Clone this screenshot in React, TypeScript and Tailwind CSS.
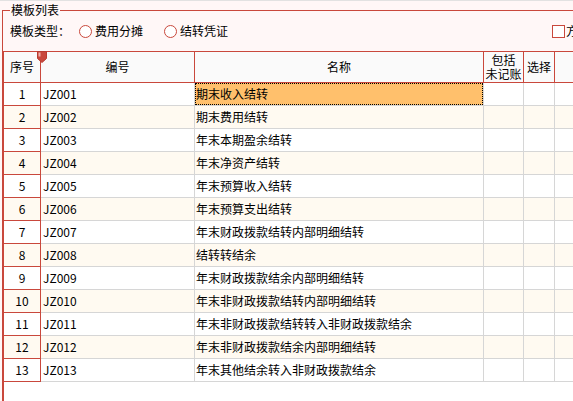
import React from "react";

const rows: [string, string][] = [
  ["JZ001", "期末收入结转"],
  ["JZ002", "期末费用结转"],
  ["JZ003", "年末本期盈余结转"],
  ["JZ004", "年末净资产结转"],
  ["JZ005", "年末预算收入结转"],
  ["JZ006", "年末预算支出结转"],
  ["JZ007", "年末财政拨款结转内部明细结转"],
  ["JZ008", "结转转结余"],
  ["JZ009", "年末财政拨款结余内部明细结转"],
  ["JZ010", "年末非财政拨款结转内部明细结转"],
  ["JZ011", "年末非财政拨款结转转入非财政拨款结余"],
  ["JZ012", "年末非财政拨款结余内部明细结转"],
  ["JZ013", "年末其他结余转入非财政拨款结余"],
];

function Radio({ label }: { label: string }) {
  return (
    <div className="flex items-center shrink-0">
      <span className="w-[13px] h-[13px] rounded-full border border-[#c9483c] bg-white shrink-0" />
      <span className="ml-[3px] leading-[14px]">{label}</span>
    </div>
  );
}

export default function App() {
  return (
    <div
      className="w-[573px] h-[401px] overflow-hidden bg-[#fff7f7] border-t border-[#e2e2e2] text-[12px] text-black"
      style={{ fontFamily: '"Noto Sans CJK SC", "Liberation Sans", sans-serif' }}
    >
      <div className="relative mt-[9px] ml-[2px] h-[400px] border-t border-l border-[#c9483c]">
        <span className="absolute left-[7px] top-[-8px] px-[1px] leading-[14px] bg-[#fff7f7]">
          模板列表
        </span>
        <div className="flex items-center h-[40px] pl-[7px] whitespace-nowrap">
          <span className="w-[60px] shrink-0 leading-[14px]">模板类型：</span>
          <div className="ml-[9px] flex items-center shrink-0">
            <Radio label="费用分摊" />
            <div className="ml-[21px]">
              <Radio label="结转凭证" />
            </div>
          </div>
          <div className="ml-[324px] flex items-center shrink-0">
            <span className="w-[13px] h-[13px] border border-[#c9483c] bg-white shrink-0" />
            <span className="ml-[1px] leading-[14px]">方案</span>
          </div>
        </div>
        <div className="relative h-[360px] bg-white border-t border-l border-[#c9483c]">
          <div className="flex h-[31px] bg-[#fafafa] border-b border-[#c9483c] whitespace-nowrap">
            <div className="w-[37px] shrink-0 border-r border-[#c9483c] flex items-center justify-center">序号</div>
            <div className="w-[154px] shrink-0 border-r border-[#c9483c] flex items-center justify-center">编号</div>
            <div className="w-[289px] shrink-0 border-r border-[#c9483c] flex items-center justify-center">名称</div>
            <div className="w-[40px] shrink-0 border-r border-[#c9483c] flex flex-col items-center justify-center leading-[14px]">
              <span>包括</span>
              <span>未记账</span>
            </div>
            <div className="w-[31px] shrink-0 border-r border-[#c9483c] flex items-center justify-center">选择</div>
            <div className="w-[40px] shrink-0" />
          </div>
          {rows.map(([code, name], i) => {
            const bg = i % 2 === 1 ? "bg-[#fffaf1]" : "bg-white";
            return (
              <div key={code} className={`flex h-[23px] whitespace-nowrap ${bg}`}>
                <div className="w-[37px] shrink-0 border-r border-b border-[#c9483c] flex items-center justify-center">
                  {i + 1}
                </div>
                <div className="w-[154px] shrink-0 border-r border-b border-[#d6d6d6] flex items-center pl-[2px]">
                  {code}
                </div>
                {i === 0 ? (
                  <div className="w-[289px] shrink-0 border-r border-b border-[#d6d6d6] flex">
                    <div className="flex-1 flex items-center bg-[#ffc06c] border border-dotted border-black">
                      {name}
                    </div>
                  </div>
                ) : (
                  <div className="w-[289px] shrink-0 border-r border-b border-[#d6d6d6] flex items-center pl-[1px]">
                    {name}
                  </div>
                )}
                <div className="w-[40px] shrink-0 border-r border-b border-[#d6d6d6]" />
                <div className="w-[31px] shrink-0 border-r border-b border-[#d6d6d6]" />
                <div className="w-[40px] shrink-0 border-b border-[#d6d6d6]" />
              </div>
            );
          })}
          <svg
            className="absolute left-[33px] top-[-1px]"
            width="10"
            height="12"
            viewBox="0 0 10 12"
          >
            <path d="M0.5 0.5 H9.5 V7.5 L5 11.5 L0.5 7.5 Z" fill="#c9483c" stroke="#b83a2f" strokeWidth="1" />
            <rect x="1.5" y="1.5" width="2" height="4" fill="#f0b0a8" />
          </svg>
        </div>
      </div>
    </div>
  );
}
